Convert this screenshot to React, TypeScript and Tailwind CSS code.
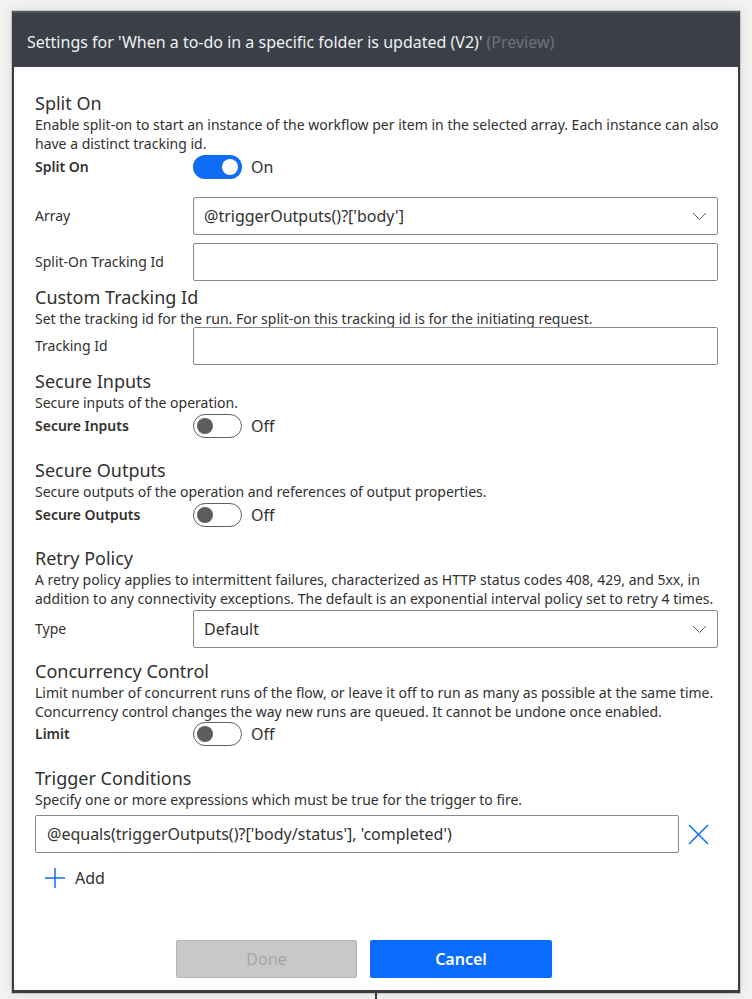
import React from 'react';

const FONT = "font-['Noto_Sans','Open_Sans',sans-serif]";

function Toggle({ on }: { on: boolean }) {
  return (
    <div className="flex items-center">
      {on ? (
        <div className="flex h-[24px] w-[49px] items-center justify-end rounded-full bg-[#0f6cf5] pr-[4px]">
          <div className="h-[16px] w-[16px] rounded-full bg-white" />
        </div>
      ) : (
        <div className="flex h-[24px] w-[49px] items-center rounded-full border border-[#605e5c] bg-white pl-[3px]">
          <div className="h-[16px] w-[16px] rounded-full bg-[#5c5c5c]" />
        </div>
      )}
      <span className="ml-[9px] text-[16px] leading-[20px] text-[#323130]">{on ? 'On' : 'Off'}</span>
    </div>
  );
}

function Chevron() {
  return (
    <svg width="15" height="9" viewBox="0 0 15 9" fill="none">
      <path d="M1 1l6.5 6.5L14 1" stroke="#605e5c" strokeWidth="1" />
    </svg>
  );
}

function Heading({ children, className }: { children: React.ReactNode; className?: string }) {
  return <div className={`text-[18px] leading-[24px] text-[#323130] ${className ?? ''}`}>{children}</div>;
}

function Desc({ children }: { children: React.ReactNode }) {
  return <div className="whitespace-nowrap text-[14px] leading-[19px] text-[#323130]">{children}</div>;
}

function ToggleRow({ label, on, className }: { label: string; on: boolean; className?: string }) {
  return (
    <div className={`flex h-[24px] items-center ${className ?? ''}`}>
      <div className="w-[158px] text-[14px] font-semibold leading-[18px] text-[#323130]">{label}</div>
      <Toggle on={on} />
    </div>
  );
}

function FieldRow({
  label,
  value,
  select,
  className,
}: {
  label: string;
  value?: string;
  select?: boolean;
  className?: string;
}) {
  return (
    <div className={`flex items-center ${className ?? ''}`}>
      <div className="w-[158px] text-[14px] leading-[18px] text-[#323130]">{label}</div>
      <div className="flex h-[38px] flex-1 items-center justify-between rounded-[2px] border border-[#8a8886] pl-[10px] pr-[10px]">
        <span className="text-[16px] leading-[20px] text-[#323130]">{value}</span>
        {select && <Chevron />}
      </div>
    </div>
  );
}

export default function App() {
  return (
    <div className={`relative h-[999px] w-[752px] overflow-hidden bg-[#f3f3f3] pl-[12px] pt-[11px] ${FONT}`}>
      <div className="flex h-[982px] w-[728px] flex-col border-x-[2px] border-b-[3px] border-[#3b3b3b] bg-white shadow-[0_0_0_1px_#c8c8c8,0_0_12px_rgba(0,0,0,0.12)]">
        {/* header */}
        <div className="-mx-[2px] flex h-[56px] items-center border-t-[2px] border-[#55595f] bg-[#3b4048] pl-[15px] pt-[3px]">
          <span className="whitespace-nowrap text-[16px] leading-[20px] text-[#eef0f2]">
            Settings for 'When a to-do in a specific folder is updated (V2)'
          </span>
          <span className="ml-[4px] whitespace-nowrap text-[16px] leading-[20px] text-[#6d737b]">(Preview)</span>
        </div>

        {/* body */}
        <div className="flex flex-1 flex-col pl-[21px] pr-[20px] pt-[24px]">
          <Heading>Split On</Heading>
          <Desc>
            Enable split-on to start an instance of the workflow per item in the selected array. Each instance can also
            <br />
            have a distinct tracking id.
          </Desc>
          <ToggleRow label="Split On" on className="mt-[2px]" />
          <FieldRow label="Array" value="@triggerOutputs()?['body']" select className="mt-[18px]" />
          <FieldRow label="Split-On Tracking Id" className="mt-[8px]" />

          <Heading className="mt-[4px]">Custom Tracking Id</Heading>
          <Desc>Set the tracking id for the run. For split-on this tracking id is for the initiating request.</Desc>
          <FieldRow label="Tracking Id" className="-mt-[1px]" />

          <Heading className="mt-[4px]">Secure Inputs</Heading>
          <Desc>Secure inputs of the operation.</Desc>
          <ToggleRow label="Secure Inputs" on={false} className="mt-[2px]" />

          <Heading className="mt-[20px]">Secure Outputs</Heading>
          <Desc>Secure outputs of the operation and references of output properties.</Desc>
          <ToggleRow label="Secure Outputs" on={false} className="mt-[2px]" />

          <Heading className="mt-[19px]">Retry Policy</Heading>
          <Desc>
            A retry policy applies to intermittent failures, characterized as HTTP status codes 408, 429, and 5xx, in
            <br />
            addition to any connectivity exceptions. The default is an exponential interval policy set to retry 4 times.
          </Desc>
          <FieldRow label="Type" value="Default" select className="mt-[2px]" />

          <Heading className="mt-[11px]">Concurrency Control</Heading>
          <Desc>
            Limit number of concurrent runs of the flow, or leave it off to run as many as possible at the same time.
            <br />
            Concurrency control changes the way new runs are queued. It cannot be undone once enabled.
          </Desc>
          <ToggleRow label="Limit" on={false} className="mt-[1px]" />

          <Heading className="mt-[20px]">Trigger Conditions</Heading>
          <Desc>Specify one or more expressions which must be true for the trigger to fire.</Desc>
          <div className="mt-[6px] flex items-center">
            <div className="flex h-[38px] w-[644px] items-center rounded-[2px] border border-[#8a8886] pl-[11px]">
              <span className="whitespace-nowrap text-[16px] leading-[20px] text-[#323130]">
                @equals(triggerOutputs()?['body/status'], 'completed')
              </span>
            </div>
            <svg className="ml-[9px]" width="21" height="21" viewBox="0 0 21 21" fill="none">
              <path d="M1 1l19 19M20 1L1 20" stroke="#0f6cf5" strokeWidth="1.5" />
            </svg>
          </div>
          <div className="mt-[15px] flex items-center pl-[10px]">
            <svg width="20" height="20" viewBox="0 0 20 20" fill="none">
              <path d="M10 0v20M0 10h20" stroke="#0f6cf5" strokeWidth="1.5" />
            </svg>
            <span className="ml-[10px] text-[16px] leading-[20px] text-[#323130]">Add</span>
          </div>

          <div className="mt-[52px] flex gap-[13px] pl-[141px]">
            <button
              type="button"
              className="h-[38px] w-[181px] rounded-[2px] border border-[#b4b4b4] bg-[#c8c8c8] text-[16px] text-[#a6a6a6]"
            >
              Done
            </button>
            <button
              type="button"
              className="h-[38px] w-[182px] rounded-[2px] bg-[#0a6cff] text-[16px] font-semibold text-white"
            >
              Cancel
            </button>
          </div>
        </div>
      </div>
      <div className="ml-[363px] h-[6px] w-[2px] bg-[#3b3b3b]" />
    </div>
  );
}
